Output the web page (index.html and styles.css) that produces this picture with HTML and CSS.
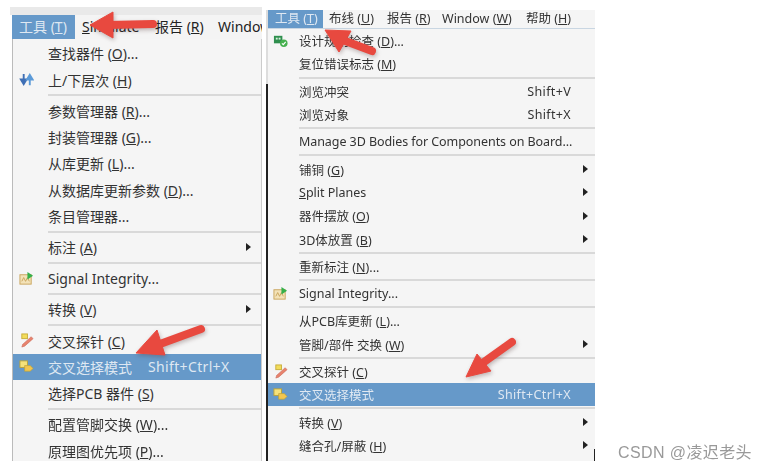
FILE: index.html
```html
<!DOCTYPE html>
<html lang="zh-CN">
  <head>
    <meta charset="UTF-8" />
    <title>工具菜单</title>
    <link rel="stylesheet" href="styles.css">
  </head>
  <body>
    <div class="page">
      <!-- left screenshot -->
      <div class="shot shot-left">
        <div class="bar">
          <span class="bar-item active">工具 (<u>T</u>)</span>
          <span class="bar-item"><u>S</u>imulate</span>
          <span class="bar-item">报告 (<u>R</u>)</span>
          <span class="bar-item">Window</span>
        </div>
        <div class="menu">
          <div class="item"><span class="label">查找器件 (<u>O</u>)...</span></div>
          <div class="item">
            <svg class="icon" viewBox="0 0 16 16"><path d="M5 2v8M2 8l3 5 3-5z" fill="#3f6fb5" stroke="#3f6fb5" stroke-width="2"/><path d="M11.500 14V6M8.500 8l3-5 3 5z" fill="#5b9ad8" stroke="#5b9ad8" stroke-width="2"/></svg>
            <span class="label">上/下层次 (<u>H</u>)</span>
          </div>
          <div class="sep"></div>
          <div class="item"><span class="label">参数管理器 (<u>R</u>)...</span></div>
          <div class="item"><span class="label">封装管理器 (<u>G</u>)...</span></div>
          <div class="item"><span class="label">从库更新 (<u>L</u>)...</span></div>
          <div class="item"><span class="label">从数据库更新参数 (<u>D</u>)...</span></div>
          <div class="item"><span class="label">条目管理器...</span></div>
          <div class="sep"></div>
          <div class="item has-sub"><span class="label">标注 (<u>A</u>)</span><span class="tri"></span></div>
          <div class="sep"></div>
          <div class="item">
            <svg class="icon" viewBox="0 0 16 16"><rect x="1" y="4" width="12" height="10" fill="#f3e2b8" stroke="#c9a45c"/><path d="M3 11l2-4 2 4 2-4 2 4" fill="none" stroke="#c9a45c"/><path d="M9 1l6 4-6 4z" fill="#35b04a"/></svg>
            <span class="label">Signal Integrity...</span>
          </div>
          <div class="sep"></div>
          <div class="item has-sub"><span class="label">转换 (<u>V</u>)</span><span class="tri"></span></div>
          <div class="sep"></div>
          <div class="item">
            <svg class="icon" viewBox="0 0 16 16"><rect x="3" y="1" width="6" height="5" fill="#f2dc5a" stroke="#c8ae3a"/><path d="M13 4l2 2-9 8-3 1 1-3z" fill="#e8836e" stroke="#c96a58" stroke-width=".6"/></svg>
            <span class="label">交叉探针 (<u>C</u>)</span>
          </div>
          <div class="item selected">
            <svg class="icon" viewBox="0 0 16 16"><rect x="1" y="2" width="8" height="7" fill="#f6e27a" stroke="#b9a23a"/><path d="M6 7h6l3 3-3 3H6z" fill="#f3c64e" stroke="#b9a23a" stroke-width=".7"/></svg>
            <span class="label">交叉选择模式</span><span class="keys keys-near">Shift+Ctrl+X</span>
          </div>
          <div class="item"><span class="label">选择PCB 器件 (<u>S</u>)</span></div>
          <div class="sep"></div>
          <div class="item"><span class="label">配置管脚交换 (<u>W</u>)...</span></div>
          <div class="item"><span class="label">原理图优先项 (<u>P</u>)...</span></div>
        </div>
      </div>

      <!-- right screenshot -->
      <div class="shot shot-right">
        <div class="bar">
          <span class="bar-item active">工具 (<u>T</u>)</span>
          <span class="bar-item">布线 (<u>U</u>)</span>
          <span class="bar-item">报告 (<u>R</u>)</span>
          <span class="bar-item">Window (<u>W</u>)</span>
          <span class="bar-item">帮助 (<u>H</u>)</span>
        </div>
        <div class="menu">
          <div class="item">
            <svg class="icon" viewBox="0 0 16 16"><rect x="1" y="3" width="9" height="8" fill="#2f8f4e"/><rect x="3" y="5" width="2" height="2" fill="#d8eedd"/><rect x="6" y="5" width="2" height="2" fill="#d8eedd"/><circle cx="11.500" cy="11" r="4" fill="#46b04f"/><path d="M9.500 11l1.500 1.500 2.500-3" fill="none" stroke="#fff" stroke-width="1.200"/></svg>
            <span class="label">设计规则检查 (<u>D</u>)...</span>
          </div>
          <div class="item"><span class="label">复位错误标志 (<u>M</u>)</span></div>
          <div class="sep"></div>
          <div class="item"><span class="label">浏览冲突</span><span class="keys">Shift+V</span></div>
          <div class="item"><span class="label">浏览对象</span><span class="keys">Shift+X</span></div>
          <div class="sep"></div>
          <div class="item"><span class="label tight">Manage 3D Bodies for Components on Board...</span></div>
          <div class="sep"></div>
          <div class="item has-sub"><span class="label">铺铜 (<u>G</u>)</span><span class="tri"></span></div>
          <div class="item has-sub"><span class="label"><u>S</u>plit Planes</span><span class="tri"></span></div>
          <div class="item has-sub"><span class="label">器件摆放 (<u>O</u>)</span><span class="tri"></span></div>
          <div class="item has-sub"><span class="label">3D体放置 (<u>B</u>)</span><span class="tri"></span></div>
          <div class="sep"></div>
          <div class="item"><span class="label">重新标注 (<u>N</u>)...</span></div>
          <div class="sep"></div>
          <div class="item">
            <svg class="icon" viewBox="0 0 16 16"><rect x="1" y="4" width="12" height="10" fill="#f3e2b8" stroke="#c9a45c"/><path d="M3 11l2-4 2 4 2-4 2 4" fill="none" stroke="#c9a45c"/><path d="M9 1l6 4-6 4z" fill="#35b04a"/></svg>
            <span class="label">Signal Integrity...</span>
          </div>
          <div class="sep"></div>
          <div class="item"><span class="label">从PCB库更新 (<u>L</u>)...</span></div>
          <div class="item has-sub"><span class="label">管脚/部件 交换 (<u>W</u>)</span><span class="tri"></span></div>
          <div class="sep"></div>
          <div class="item">
            <svg class="icon" viewBox="0 0 16 16"><rect x="3" y="1" width="6" height="5" fill="#f2dc5a" stroke="#c8ae3a"/><path d="M13 4l2 2-9 8-3 1 1-3z" fill="#e8836e" stroke="#c96a58" stroke-width=".6"/></svg>
            <span class="label">交叉探针 (<u>C</u>)</span>
          </div>
          <div class="item selected">
            <svg class="icon" viewBox="0 0 16 16"><rect x="1" y="2" width="8" height="7" fill="#f6e27a" stroke="#b9a23a"/><path d="M6 7h6l3 3-3 3H6z" fill="#f3c64e" stroke="#b9a23a" stroke-width=".7"/></svg>
            <span class="label">交叉选择模式</span><span class="keys">Shift+Ctrl+X</span>
          </div>
          <div class="sep"></div>
          <div class="item has-sub"><span class="label">转换 (<u>V</u>)</span><span class="tri"></span></div>
          <div class="item has-sub"><span class="label">缝合孔/屏蔽 (<u>H</u>)</span><span class="tri"></span></div>
        </div>
      </div>

      <!-- red annotation arrows -->
      <svg class="arrows" viewBox="0 0 768 472">
        <path class="shaft" d="M153 24L108 25"/>
        <path class="head" d="M90 25L113 12L113 38Z"/>
        <path class="shaft" d="M372 51L340 39"/>
        <path class="head" d="M325 30L351 31L339 52Z"/>
        <path class="shaft" d="M201 329L160 344"/>
        <path class="head" d="M136 353L165 355L157 330Z"/>
        <path class="shaft" d="M512 342L484 362"/>
        <path class="head" d="M466 377L491 371L477 354Z"/>
      </svg>

      <div class="mark">CSDN @凌迟老头</div>
    </div>
  </body>
</html>
```

FILE: styles.css
```css
html, body {
  margin: 0;
  background: #fff;
}

.page {
  position: relative;
  display: flex;
  align-items: flex-start;
  width: 768px;
  height: 472px;
  overflow: hidden;
  font-family: "Noto Sans", "Noto Sans CJK SC", sans-serif;
  color: #333;
}

.shot {
  box-sizing: border-box;
  filter: blur(0.35px);
}

.shot-left {
  width: 252px;
  height: 454px;
  margin: 7px 0 0 10px;
  padding-top: 8px;
  font-size: 14px;
  background: linear-gradient(#e9e9e9 8px, #fff 8px);
}

.shot-right {
  width: 329px;
  height: 451px;
  margin: 10px 0 0 4px;
  font-size: 12.500px;
  border-left: 2px solid #222;
  border-image: linear-gradient(#ddd 75px, #222 75px) 1;
}

.bar {
  display: flex;
  align-items: center;
  background: #f4f4f4;
  overflow: hidden;
  white-space: nowrap;
}

.shot-left .bar {
  height: 24px;
  margin-left: 2px;
  color: #222;
}

.shot-right .bar {
  height: 18px;
  background: #f5f5f5;
  border-bottom: 1px solid #c9d6e2;
}

.bar-item {
  flex: none;
  box-sizing: border-box;
  padding: 0 7px;
  line-height: 1;
}

.bar-item.active {
  align-self: stretch;
  display: flex;
  align-items: center;
  background: #6699c9;
  color: #dfe8f2;
}

.shot-left .bar-item.active { width: 63px; }
.shot-left .bar-item:nth-child(2) { width: 73px; }
.shot-left .bar-item:nth-child(3) { width: 63px; }

.shot-right .bar-item.active { width: 55px; }
.shot-right .bar-item:nth-child(2) { padding-left: 6px; width: 58px; }
.shot-right .bar-item:nth-child(3) { padding-left: 6px; width: 55px; }
.shot-right .bar-item:nth-child(4) { padding-left: 6px; width: 84px; }
.shot-right .bar-item:nth-child(5) { padding-left: 6px; }

.menu {
  background: #f5f5f5;
}

.shot-left .menu {
  height: 422px;
  padding-top: 1px;
  box-sizing: border-box;
  margin-left: 2px;
  border-left: 1px solid #bbb;
  border-right: 1px solid #ccc;
}

.shot-right .menu {
  height: 432px;
  background: linear-gradient(#222, #222) right bottom / 1px 12px no-repeat #f5f5f5;
}

.item {
  position: relative;
  display: flex;
  align-items: center;
  white-space: nowrap;
}

.shot-left .item {
  height: 26.400px;
  padding-left: 35px;
}

.shot-right .item {
  height: 23.300px;
  padding-left: 31px;
}

.item.selected {
  background: #6699c9;
  color: #dfe8f2;
}

.tight {
  letter-spacing: -0.07px;
}

.icon {
  position: absolute;
  width: 15px;
  height: 15px;
}

.shot-left .icon {
  left: 6px;
}

.shot-right .icon {
  left: 5px;
}

.keys {
  margin-left: auto;
  margin-right: 24px;
  letter-spacing: 0.35px;
}

.keys-near {
  margin-left: 16px;
  margin-right: 0;
}

.tri {
  position: absolute;
  top: 50%;
  margin-top: -4px;
  border-left: 5px solid #222;
  border-top: 4px solid transparent;
  border-bottom: 4px solid transparent;
}

.shot-left .tri {
  right: 10px;
}

.shot-right .tri {
  right: 7px;
}

.sep {
  height: 2px;
  background: #d9d9d9;
}

.shot-left .sep {
  margin: 1.350px 0 1.350px 35px;
}

.shot-right .sep {
  margin: 1px 0 1px 31px;
}

.arrows {
  position: absolute;
  top: 0;
  left: 0;
  width: 768px;
  height: 472px;
  filter: drop-shadow(1px 2px 2px rgba(90, 60, 60, 0.35));
}

.shaft {
  fill: none;
  stroke: #e8493f;
  stroke-width: 8;
  stroke-linecap: round;
}

.head {
  fill: #e8493f;
  stroke: #e8493f;
  stroke-width: 1;
  stroke-linejoin: round;
}

.mark {
  position: absolute;
  right: 16px;
  bottom: 9px;
  font-family: "Liberation Sans", "Noto Sans CJK SC", sans-serif;
  font-size: 16px;
  letter-spacing: 0.4px;
  color: #999;
}
```
